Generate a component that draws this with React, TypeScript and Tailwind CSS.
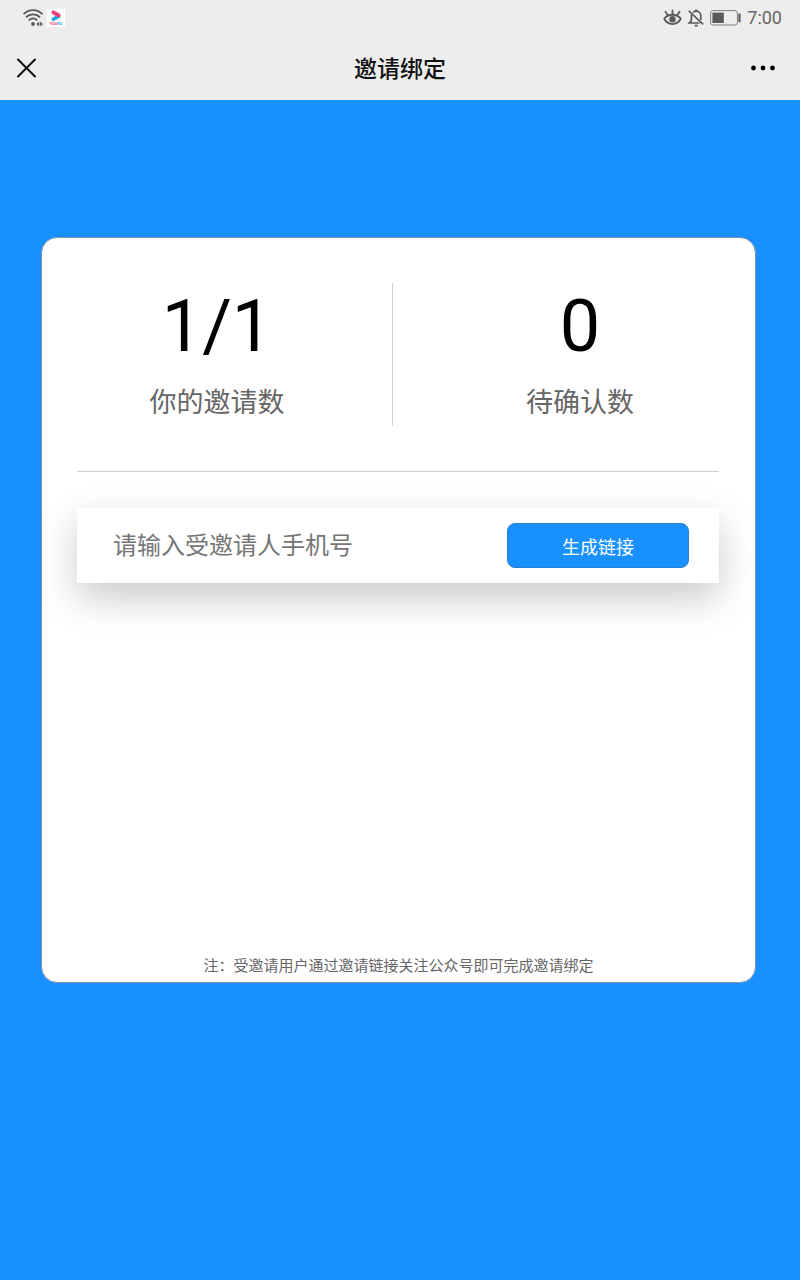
import { useState } from "react";

function WifiIcon() {
    return (
        <svg width="22" height="20" viewBox="0 0 22 20" fill="none" stroke="#5a5a5a" strokeWidth="1.8">
            <path d="M1.5 6.2C7 0.8 15 0.8 20.5 6.2" />
            <path d="M4 9.4C8 5.4 14 5.4 18 9.4" />
            <path d="M6.8 12.4C9.5 9.8 12.5 9.8 15.2 12.4" />
            <circle cx="11" cy="16" r="1.9" fill="#5a5a5a" stroke="none" />
            <path d="M17.2 13.6v4.8l-2.8-2.4zM18.2 13.6v4.8l2.8-2.4z" fill="#5a5a5a" stroke="none" />
        </svg>
    );
}

function YoukuBadge() {
    return (
        <svg width="18" height="18" viewBox="0 0 18 18">
            <rect width="18" height="18" fill="#fff" />
            <path d="M6.4 10.2L11.6 7.4" stroke="#25a5e8" strokeWidth="3.8" strokeLinecap="round" />
            <path d="M6.4 3.4L11.6 6.2" stroke="#ee4173" strokeWidth="4" strokeLinecap="round" />
            <text x="9" y="16.4" textAnchor="middle" fontFamily="Roboto, sans-serif" fontSize="4" fontWeight="700">
                <tspan fill="#ee4173">YOU</tspan>
                <tspan fill="#25a5e8">KU</tspan>
            </text>
        </svg>
    );
}

function EyeIcon() {
    return (
        <svg width="19" height="18" viewBox="0 0 19 18" fill="none" stroke="#5a5a5a" strokeWidth="1.8" strokeLinecap="round">
            <path d="M1.2 9.8C5 4.4 14 4.4 17.8 9.8C14 16.8 5 16.8 1.2 9.8Z" />
            <circle cx="9.5" cy="10.2" r="3.2" fill="#5a5a5a" stroke="none" />
            <path d="M9.5 5V1.4M4.6 5.8L2.4 2.8M14.4 5.8L16.6 2.8" />
        </svg>
    );
}

function BellOffIcon() {
    return (
        <svg width="16" height="18" viewBox="0 0 16 18" fill="none" stroke="#5a5a5a" strokeWidth="1.7">
            <path d="M0.8 1.8L15.2 15.4" />
            <path d="M3.4 5.6V11.6L1.2 14H11.6" />
            <path d="M5 3.4C6 2.6 7 2.2 8.2 2.2C11 2.2 12.8 4.4 12.8 7V11" />
            <path d="M8.2 2.4V0.6" strokeWidth="2.2" />
            <path d="M6.6 16.6H9.8" />
        </svg>
    );
}

function BatteryIcon() {
    return (
        <svg width="31" height="16" viewBox="0 0 31 16">
            <rect x="0.6" y="0.6" width="26.8" height="14.4" rx="2.4" fill="none" stroke="#7d7d7d" />
            <rect x="2.4" y="2.6" width="11.4" height="10.4" fill="#5a5a5a" />
            <rect x="28.4" y="3.6" width="2.2" height="8.6" rx="0.6" fill="#5a5a5a" />
        </svg>
    );
}

function Stat({ value, label }: { value: string; label: string }) {
    return (
        <div className="flex flex-1 flex-col items-center">
            <span className="text-[72px] leading-[88px] text-black">{value}</span>
            <span className="mt-3 text-[27px] leading-10 text-[#666]">{label}</span>
        </div>
    );
}

export default function App() {
    const [phone, setPhone] = useState("");

    return (
        <div className="flex min-h-screen flex-col bg-[#1890ff] font-[Roboto,'Noto_Sans_CJK_SC',sans-serif]">
            <header className="bg-[#ededed]">
                {/* Status bar */}
                <div className="flex h-9 items-center justify-between pr-[18px] pl-[22px]">
                    <div className="flex items-center gap-[3px]">
                        <WifiIcon />
                        <YoukuBadge />
                    </div>
                    <div className="flex items-center gap-[6px] text-[18px] leading-6 text-[#666]">
                        <EyeIcon />
                        <BellOffIcon />
                        <BatteryIcon />
                        <span>7:00</span>
                    </div>
                </div>

                {/* Title bar */}
                <div className="flex h-16 items-center justify-between px-4">
                    <button type="button" aria-label="关闭" className="flex w-[42px]">
                        <svg width="21" height="20" viewBox="0 0 21 20" stroke="#111" strokeWidth="2" strokeLinecap="round">
                            <path d="M2 1.5L19 18.5M19 1.5L2 18.5" />
                        </svg>
                    </button>
                    <h1 className="pt-1 text-[23px] leading-8 font-medium text-[#111]">邀请绑定</h1>
                    <button type="button" aria-label="更多" className="flex w-[42px] justify-center">
                        <svg width="24" height="6" viewBox="0 0 24 6" fill="#000">
                            <circle cx="2.5" cy="3" r="2.4" />
                            <circle cx="12" cy="3" r="2.4" />
                            <circle cx="21.5" cy="3" r="2.4" />
                        </svg>
                    </button>
                </div>
            </header>

            <main className="mt-[137px] mr-11 ml-[41px] flex min-h-[746px] flex-col rounded-2xl border border-[#7d93ab] bg-white">
                {/* Stats */}
                <div className="mt-[45px] flex h-[143px] items-start">
                    <Stat value="1/1" label="你的邀请数" />
                    <div className="mr-3 h-full w-px bg-[#d0d0d0]" />
                    <Stat value="0" label="待确认数" />
                </div>

                <hr className="mr-9 ml-[35px] mt-[45px] border-[#d0d0d0]" />

                {/* Invite form */}
                <form
                    onSubmit={(e) => e.preventDefault()}
                    className="mt-9 mr-9 ml-[35px] flex h-[75px] items-center bg-white pr-[30px] pl-9 shadow-[0_15px_38px_rgba(0,0,0,0.21)]"
                >
                    <input
                        type="tel"
                        aria-label="手机号"
                        placeholder="请输入受邀请人手机号"
                        value={phone}
                        onChange={(e) => setPhone(e.target.value)}
                        className="h-12 min-w-0 flex-1 text-[24px] outline-none placeholder:text-[#757575]"
                    />
                    <button
                        type="submit"
                        className="h-[45px] w-[182px] rounded-lg border border-[#2a7fd0] bg-[#1890ff] pt-1 text-[18px] text-white"
                    >
                        生成链接
                    </button>
                </form>

                <p className="mt-auto mb-1 text-center text-[15px] leading-6 text-[#666]">
                    注：受邀请用户通过邀请链接关注公众号即可完成邀请绑定
                </p>
            </main>
        </div>
    );
}
